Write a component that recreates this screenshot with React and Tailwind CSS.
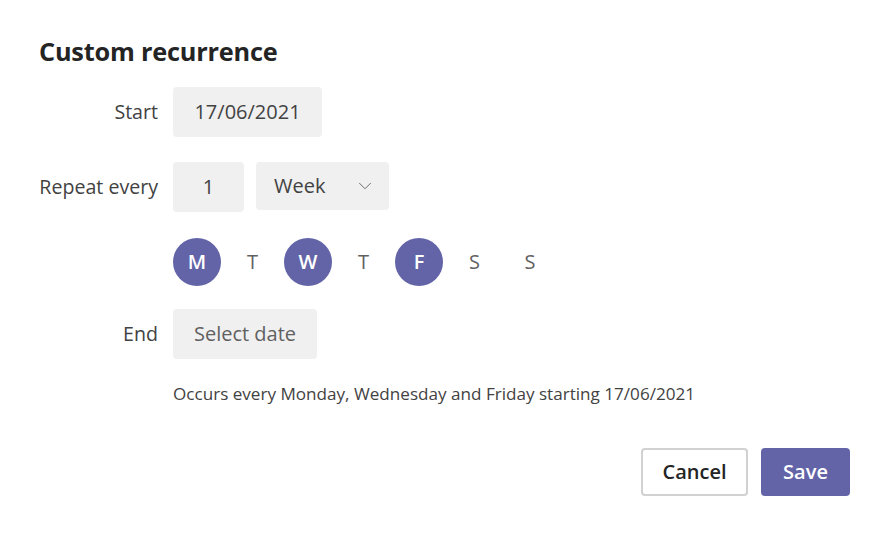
import { ChevronDown } from 'lucide-react'

const days = [
  { l: 'M', on: true },
  { l: 'T', on: false },
  { l: 'W', on: true },
  { l: 'T', on: false },
  { l: 'F', on: true },
  { l: 'S', on: false },
  { l: 'S', on: false },
]

function Row({ label, children, className = '' }) {
  return (
    <div className={`flex items-center ${className}`}>
      <div className="w-[119px] shrink-0 text-right text-[19.6px] text-[#424242] whitespace-nowrap">{label}</div>
      <div className="ml-[15px] flex items-center gap-[12px]">{children}</div>
    </div>
  )
}

export default function App() {
  return (
    <div
      className="w-[889px] h-[538px] bg-white pl-[39px] pt-[34px] text-[#242424]"
      style={{ fontFamily: '"Segoe UI", "Open Sans", sans-serif' }}
    >
      <h1 className="text-[25.3px] font-bold leading-[34px] tracking-[-0.2px]">Custom recurrence</h1>

      <Row label="Start" className="mt-[19px]">
        <div className="h-[50px] w-[149px] rounded bg-[#f0f0f0] flex items-center justify-center text-[20px] text-[#424242]">
          17/06/2021
        </div>
      </Row>

      <Row label="Repeat every" className="mt-[25px]">
        <div className="h-[50px] w-[71px] rounded bg-[#f0f0f0] flex items-center justify-center text-[20px] text-[#424242]">
          1
        </div>
        <div className="h-[48px] w-[133px] rounded bg-[#f0f0f0] flex items-center justify-between pl-[18px] pr-[13px] text-[20px] text-[#424242] -mt-[2px]">
          <span>Week</span>
          <ChevronDown size={22} strokeWidth={1} className="text-[#616161]" />
        </div>
      </Row>

      <div className="ml-[134px] mt-[26px] flex items-center gap-[7.5px]">
        {days.map((d, i) => (
          <div
            key={i}
            className={`w-[48px] h-[48px] rounded-full flex items-center justify-center text-[20px] ${
              d.on ? 'bg-[#6264a7] text-white font-semibold' : 'text-[#616161]'
            }`}
          >
            {d.l}
          </div>
        ))}
      </div>

      <Row label="End" className="mt-[23px]">
        <div className="h-[50px] w-[144px] rounded bg-[#f0f0f0] flex items-center justify-center text-[20px] text-[#616161]">
          Select date
        </div>
      </Row>

      <p className="ml-[134px] mt-[23px] text-[17.1px] leading-[24px] text-[#424242] whitespace-nowrap">
        Occurs every Monday, Wednesday and Friday starting 17/06/2021
      </p>

      <div className="mt-[42px] w-[811px] flex justify-end gap-[13px]">
        <button className="h-[48px] w-[107px] rounded border-2 border-[#d1d1d1] bg-white text-[20px] font-semibold text-[#242424]">
          Cancel
        </button>
        <button className="h-[48px] w-[89px] rounded bg-[#6264a7] text-[20px] font-semibold text-white">
          Save
        </button>
      </div>
    </div>
  )
}
